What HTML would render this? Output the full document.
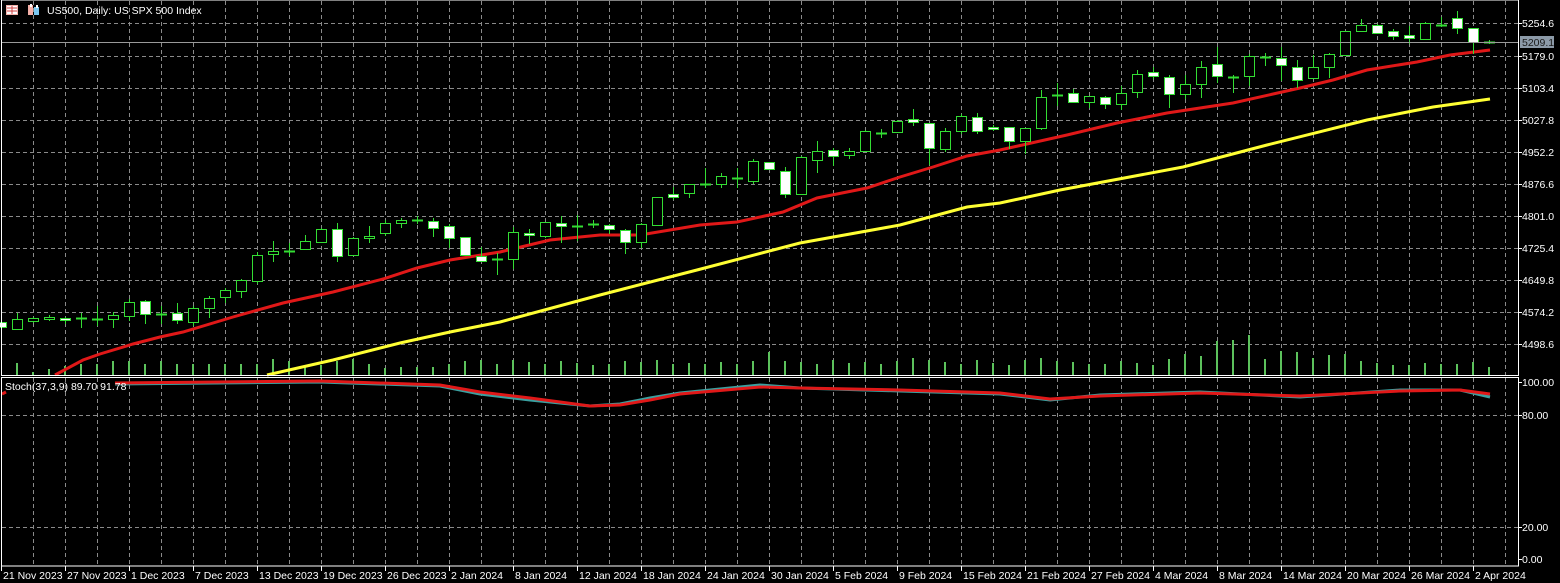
<!DOCTYPE html>
<html><head><meta charset="utf-8"><style>
html,body{margin:0;padding:0;background:#000;width:1560px;height:583px;overflow:hidden}
svg{position:absolute;left:0;top:0}
text{font-family:"Liberation Sans",sans-serif;font-size:10.5px;fill:#fff}
</style></head><body>
<svg width="1560" height="583" viewBox="0 0 1560 583" xmlns="http://www.w3.org/2000/svg">
<g id="grid" stroke="#8a8a8a" stroke-width="1" stroke-dasharray="4,3"></g>
<g id="vol" stroke="#5cc25c" stroke-width="2"></g>
<polyline fill="none" stroke="#ffff33" stroke-width="3" points="267,375 333,360 400,343 450,332 500,322 600,295 697,270 800,243 900,225 967,207 1000,203 1060,190 1183,167 1267,145 1367,120 1433,107 1490,99"/>
<polyline fill="none" stroke="#e01818" stroke-width="3" points="55,375 83,360 100,354 133,344 160,337 183,332 233,317 283,303 333,292 383,279 417,268 450,260 500,252 550,240 600,235 640,235 700,225 737,222 783,212 817,198 867,188 900,177 933,167 967,156 1000,150 1067,135 1117,123 1167,113 1233,103 1300,88 1333,80 1367,70 1417,62 1450,55 1490,50"/>
<g id="candles"></g>
<line x1="2" y1="42.5" x2="1518" y2="42.5" stroke="#9a9a9a"/>
<polyline fill="none" stroke="#3aa0a0" stroke-width="3" points="115,384 320,382 440,386 480,394 530,400 590,406 620,404 650,398 680,393 760,385 800,388 900,391 1000,394 1050,400 1100,395 1200,392 1300,397 1400,390 1460,390 1490,397"/>
<polyline fill="none" stroke="#e01818" stroke-width="3" points="115,383 320,381 440,385 480,392 530,398 590,406 620,405 650,400 680,394 760,387 800,388 900,390 1000,393 1050,399 1100,396 1200,393 1300,396 1400,391 1460,390 1490,394"/>
<polyline fill="none" stroke="#e01818" stroke-width="3" points="2,394 6,392"/>
<rect x="1.5" y="0" width="1517" height="375.5" fill="none" stroke="#fff"/>
<rect x="1.5" y="377.5" width="1517" height="188.5" fill="none" stroke="#fff"/>
<rect x="6" y="5" width="12" height="10" fill="#f4b0a8"/><rect x="7" y="6" width="10" height="8" fill="#fff"/>
<line x1="7" y1="8" x2="17" y2="8" stroke="#d04040"/><line x1="7" y1="11" x2="17" y2="11" stroke="#d04040"/><line x1="12" y1="6" x2="12" y2="14" stroke="#d04040"/>
<rect x="28" y="5" width="5" height="10" fill="#f4b0a8"/><rect x="34" y="7" width="5" height="8" fill="#7cc8f0"/><rect x="30" y="4" width="2" height="3" fill="#fff"/><rect x="36" y="5" width="2" height="3" fill="#fff"/>
<text x="47" y="14" font-size="10.5">US500, Daily:  US SPX 500 Index</text>
<text x="5" y="390">Stoch(37,3,9) 89.70 91.78</text>
<g id="axis"></g>
<rect x="1520" y="36" width="34" height="12" fill="#8c9aa8"/>
<text x="1522" y="46" style="fill:#1a1a1a">5209.1</text>
</svg>
<script>
var NS="http://www.w3.org/2000/svg";
function el(p,t,a,txt){var e=document.createElementNS(NS,t);for(var k in a)e.setAttribute(k,a[k]);if(txt)e.textContent=txt;document.getElementById(p).appendChild(e);return e;}
for(var x=33;x<1518;x+=32){el('grid','line',{x1:x+.5,y1:1,x2:x+.5,y2:375});el('grid','line',{x1:x+.5,y1:378,x2:x+.5,y2:566});}
var py=[23,56,88,120,152,184,216,248,280,312,344];
py.forEach(function(y){el('grid','line',{x1:2,y1:y+.5,x2:1518,y2:y+.5});});
[415,527].forEach(function(y){el('grid','line',{x1:2,y1:y+.5,x2:1518,y2:y+.5});});
var vt=[366,363,372,369,366,364,364,361,361,364,361,364,364,364,364,364,364,359,361,367,365,361,359,364,368,367,367,367,364,361,360,364,360,362,364,361,363,365,364,361,362,360,364,363,364,362,364,361,352,361,362,364,360,363,362,364,361,358,360,362,364,360,363,365,360,358,361,362,364,364,361,363,365,359,354,356,341,340,335,359,351,352,358,355,354,361,363,365,365,363,364,364,362,367];
vt.forEach(function(t,k){var x=1+16*k;if(x<4)return;el('vol','line',{x1:x,y1:t,x2:x,y2:375});});
var C=[[322,327,322,327,'w'],[319,329,313,329,'h'],[318,321,317,322,'h'],[317,319,315,320,'h'],[318,320,317,323,'w'],[318,318,313,327,'c'],[319,319,306,325,'c'],[315,319,312,327,'h'],[302,316,299,320,'h'],[301,314,300,323,'w'],[314,314,306,323,'c'],[313,320,303,323,'w'],[308,322,306,325,'h'],[298,308,296,317,'h'],[290,297,288,302,'h'],[280,291,279,297,'h'],[255,281,252,283,'h'],[251,254,241,261,'h'],[251,251,243,255,'c'],[241,249,235,249,'h'],[229,242,228,242,'h'],[229,256,223,261,'w'],[238,255,237,255,'h'],[236,238,226,242,'h'],[223,233,220,235,'h'],[220,223,218,227,'h'],[220,220,216,223,'c'],[221,228,218,236,'w'],[226,238,224,247,'w'],[237,255,237,255,'w'],[256,261,247,261,'w'],[259,259,253,274,'c'],
[232,259,227,268,'h'],[233,235,229,243,'w'],[222,236,222,237,'h'],[223,226,216,242,'w'],[226,226,215,240,'c'],[224,224,220,227,'c'],[225,229,224,233,'w'],[230,242,229,253,'w'],[224,242,223,247,'h'],[197,225,197,225,'h'],[194,197,187,199,'w'],[184,193,184,197,'h'],[184,184,168,187,'c'],[176,184,173,187,'h'],[178,178,168,187,'c'],[161,181,159,183,'h'],[162,169,162,169,'w'],[171,194,167,197,'w'],[157,194,156,194,'h'],[151,160,141,172,'h'],[150,156,148,165,'w'],[151,155,148,158,'h'],[131,151,130,151,'h'],[133,133,129,137,'c'],[121,132,120,132,'h'],[119,122,109,125,'w'],[123,148,123,164,'w'],[131,149,128,151,'h'],[116,131,114,133,'h'],[117,131,113,133,'w'],[127,128,125,130,'w'],
[127,141,127,148,'w'],[128,141,128,153,'h'],[97,128,90,129,'h'],[95,95,83,105,'c'],[93,102,89,102,'w'],[96,102,96,107,'h'],[97,104,96,108,'w'],[93,104,86,109,'h'],[74,92,70,97,'h'],[72,76,67,78,'w'],[77,94,75,107,'w'],[84,94,75,98,'h'],[67,84,61,97,'h'],[64,76,47,82,'w'],[77,77,75,92,'c'],[56,76,54,85,'h'],[57,57,53,65,'c'],[58,65,47,80,'w'],[67,80,60,87,'w'],[67,78,55,78,'h'],[54,67,53,77,'h'],[31,55,31,55,'h'],[25,31,19,31,'h'],[25,33,24,33,'w'],[31,36,29,39,'w'],[35,38,26,43,'w'],[23,39,22,39,'h'],[25,25,17,26,'c'],[18,28,11,33,'w'],[28,42,28,53,'w'],[42,42,40,43,'c']];
var G='#33dd33';
C.forEach(function(c,k){var x=1+16*k;
 el('candles','line',{x1:x+.5,y1:c[2],x2:x+.5,y2:c[3]+1,stroke:G,'stroke-width':1});
 if(c[4]=='c'){el('candles','line',{x1:x-5,y1:c[0]+.5,x2:x+6,y2:c[0]+.5,stroke:G,'stroke-width':2});}
 else{var h=Math.max(c[1]-c[0],2);el('candles','rect',{x:x-4.5,y:c[0]+.5,width:10,height:h,fill:c[4]=='w'?'#fff':'#000',stroke:G,'stroke-width':1});}
});
var pl=['5254.6','5179.0','5103.4','5027.8','4952.2','4876.6','4801.0','4725.4','4649.8','4574.2','4498.6'];
pl.forEach(function(t,i){el('axis','line',{x1:1518,y1:py[i]+.5,x2:1522,y2:py[i]+.5,stroke:'#fff'});el('axis','text',{x:1522,y:py[i]+4},t);});
[['100.00',382],['80.00',415],['20.00',527],['0.00',559]].forEach(function(a){el('axis','line',{x1:1518,y1:a[1]+.5,x2:1522,y2:a[1]+.5,stroke:'#fff'});el('axis','text',{x:1522,y:a[1]+4},a[0]);});
var dl=['21 Nov 2023','27 Nov 2023','1 Dec 2023','7 Dec 2023','13 Dec 2023','19 Dec 2023','26 Dec 2023','2 Jan 2024','8 Jan 2024','12 Jan 2024','18 Jan 2024','24 Jan 2024','30 Jan 2024','5 Feb 2024','9 Feb 2024','15 Feb 2024','21 Feb 2024','27 Feb 2024','4 Mar 2024','8 Mar 2024','14 Mar 2024','20 Mar 2024','26 Mar 2024','2 Apr 2024'];
dl.forEach(function(t,i){var x=1+64*i;el('axis','line',{x1:x+.5,y1:566,x2:x+.5,y2:571,stroke:'#fff'});el('axis','text',{x:x+2,y:579},t);});
</script>
</body></html>
